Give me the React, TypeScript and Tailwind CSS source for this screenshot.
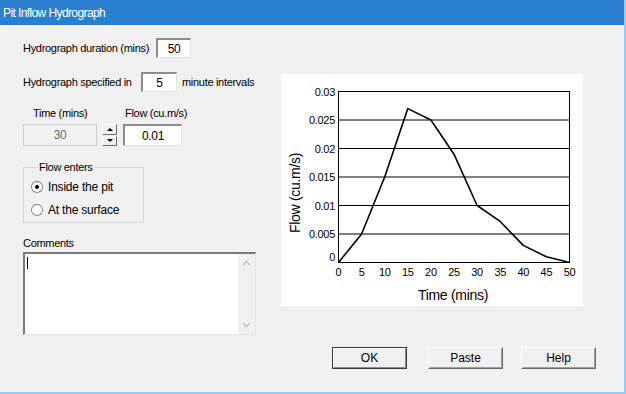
const font = { fontFamily: '"Liberation Sans", Arial, sans-serif' };

const data: [number, number][] = [
  [0, 0], [5, 0.005], [10, 0.015], [15, 0.027], [20, 0.025], [25, 0.019],
  [30, 0.01], [35, 0.0072], [40, 0.003], [45, 0.001], [50, 0],
];

// plot area inside the white chart panel
const X0 = 57.5;
const W = 231;
const Y0 = 17.5;
const H = 171;
const px = (t: number) => X0 + (t / 50) * W;
const py = (v: number) => Y0 + H - (v / 0.03) * H;

function Chart() {
  const yTicks = [0.03, 0.025, 0.02, 0.015, 0.01, 0.005, 0];
  const xTicks = [0, 5, 10, 15, 20, 25, 30, 35, 40, 45, 50];
  return (
    <div className="w-[302px] h-[232px] bg-white">
      <svg width="302" height="232" style={font}>
        {yTicks.map((v) => (
          <g key={v}>
            <line x1={X0} x2={X0 + W} y1={py(v)} y2={py(v)} stroke="#000" strokeWidth="1" />
            <text
              x={54}
              y={v === 0 ? py(v) - 2 : py(v) + 4}
              textAnchor="end"
              fontSize="11"
              fill="#000"
            >
              {v === 0 ? '0' : String(v)}
            </text>
          </g>
        ))}
        <rect x={X0} y={Y0} width={W} height={H} fill="none" stroke="#000" strokeWidth="1" />
        {xTicks.map((t) => (
          <text key={t} x={px(t)} y={202} textAnchor="middle" fontSize="11" fill="#000">
            {t}
          </text>
        ))}
        <polyline
          points={data.map(([t, v]) => `${px(t)},${py(v)}`).join(' ')}
          fill="none"
          stroke="#000"
          strokeWidth="1.6"
          strokeLinejoin="round"
        />
        <text x={172} y={226} textAnchor="middle" fontSize="14" fill="#000">
          Time (mins)
        </text>
        <text
          x={0}
          y={0}
          textAnchor="middle"
          fontSize="14"
          fill="#000"
          transform="translate(19 119) rotate(-90)"
        >
          Flow (cu.m/s)
        </text>
      </svg>
    </div>
  );
}

function Field({ value, w, h = 'h-[20px]' }: { value: string; w: string; h?: string }) {
  return (
    <div
      className={`${w} ${h} bg-white border-t-2 border-l-2 border-b border-r border-t-[#8c8c8c] border-l-[#8c8c8c] border-b-[#e3e3e3] border-r-[#e3e3e3] flex items-center justify-center text-[12px] text-black`}
    >
      {value}
    </div>
  );
}

function Radio({ checked, label }: { checked?: boolean; label: string }) {
  return (
    <div className="flex items-center h-[14px]">
      <span className="w-[12px] h-[12px] rounded-full bg-white border border-[#8a8a8a] border-t-[#6d6d6d] flex items-center justify-center">
        {checked && <span className="w-[4px] h-[4px] rounded-full bg-black" />}
      </span>
      <span className="ml-[5px] text-[12px] tracking-[-0.2px]">{label}</span>
    </div>
  );
}

function Button({ label, def }: { label: string; def?: boolean }) {
  return (
    <div
      className={`w-[75px] h-[22px] flex items-center justify-center text-[12px] bg-[#f0f0f0] ${
        def ? 'border border-[#3c3c3c]' : 'border border-t-white border-l-white border-b-[#6a6a6a] border-r-[#6a6a6a]'
      }`}
    >
      <div
        className={`w-full h-full flex items-center justify-center ${
          def ? 'border border-t-white border-l-white border-b-[#8a8a8a] border-r-[#8a8a8a]' : 'border border-[#f0f0f0] border-b-[#a0a0a0] border-r-[#a0a0a0]'
        }`}
      >
        {label}
      </div>
    </div>
  );
}

export default function App() {
  return (
    <div className="w-[626px] h-[394px] flex bg-[#f0f0f0] overflow-hidden text-black" style={font}>
      <div className="w-[624px] flex flex-col">
        {/* Title bar */}
        <div className="h-[25px] bg-[#2a80cf] flex items-center pl-[3px] text-white text-[12px] tracking-[-0.6px]">
          Pit Inflow Hydrograph
        </div>

        <div className="flex-1 flex text-[11px] tracking-[-0.3px]">
          {/* Left column */}
          <div className="pl-[23px] pt-[13px] w-[256px] flex flex-col">
            <div className="flex items-center h-[20px]">
              <span className="w-[133px]">Hydrograph duration (mins)</span>
              <Field value="50" w="w-[35px]" />
            </div>
            <div className="flex items-center h-[20px] mt-[14px]">
              <span className="w-[118px]">Hydrograph specified in</span>
              <Field value="5" w="w-[36px]" />
              <span className="ml-[5px]">minute intervals</span>
            </div>
            <div className="flex items-center h-[14px] mt-[14px]">
              <span className="ml-[10px] w-[92px]">Time (mins)</span>
              <span>Flow (cu.m/s)</span>
            </div>
            <div className="flex items-center h-[22px] mt-[4px]">
              <div className="w-[74px] h-[22px] bg-[#f0f0f0] border border-[#cccccc] flex items-center justify-center text-[12px] text-[#6d6d6d]">
                30
              </div>
              <div className="ml-[5px] w-[15px] h-[22px] flex flex-col gap-[1px]">
                <div className="flex-1 bg-[#f0f0f0] border border-t-white border-l-white border-b-[#6a6a6a] border-r-[#6a6a6a] flex items-center justify-center">
                  <span className="w-0 h-0 border-l-[3px] border-r-[3px] border-b-[3px] border-l-transparent border-r-transparent border-b-black" />
                </div>
                <div className="flex-1 bg-[#f0f0f0] border border-t-white border-l-white border-b-[#6a6a6a] border-r-[#6a6a6a] flex items-center justify-center">
                  <span className="w-0 h-0 border-l-[3px] border-r-[3px] border-t-[3px] border-l-transparent border-r-transparent border-t-black" />
                </div>
              </div>
              <div className="ml-[6px]">
                <Field value="0.01" w="w-[59px]" h="h-[22px]" />
              </div>
            </div>

            <fieldset className="mt-[14px] w-[121px] h-[63px] border border-[#d5d5d5] pl-[7px]">
              <legend className="ml-[7px] px-[1px] text-[11px] leading-[14px]">Flow enters</legend>
              <div className="mt-[6px] flex flex-col gap-[9px]">
                <Radio checked label="Inside the pit" />
                <Radio label="At the surface" />
              </div>
            </fieldset>

            <div className="mt-[13px] h-[14px] leading-[14px]">Comments</div>
            <div className="mt-[2px] w-[233px] h-[83px] bg-white flex border-t-2 border-l-2 border-b border-r border-t-[#7a7a7a] border-l-[#7a7a7a] border-b-[#e3e3e3] border-r-[#e3e3e3]">
              <div className="flex-1 pl-[2px] pt-[3px]">
                <div className="w-[1px] h-[12px] bg-black" />
              </div>
              <div className="w-[17px] bg-[#f0f0f0] flex flex-col items-center justify-between py-[6px]">
                <svg width="9" height="6" viewBox="0 0 9 6">
                  <path d="M1 5 L4.5 1.5 L8 5" fill="none" stroke="#bdbdbd" strokeWidth="1.3" />
                </svg>
                <svg width="9" height="6" viewBox="0 0 9 6">
                  <path d="M1 1 L4.5 4.5 L8 1" fill="none" stroke="#bdbdbd" strokeWidth="1.3" />
                </svg>
              </div>
            </div>
          </div>

          {/* Right column */}
          <div className="ml-[25px] pt-[49px] flex flex-col">
            <Chart />
            <div className="mt-[41px] ml-[51px] flex text-[12px] tracking-normal">
              <Button label="OK" def />
              <div className="ml-[21px]">
                <Button label="Paste" />
              </div>
              <div className="ml-[18px]">
                <Button label="Help" />
              </div>
            </div>
          </div>
        </div>
        <div className="h-[2px] bg-[#9ccbf1]" />
      </div>
      <div className="w-[2px] bg-[#9ccbf1]" />
    </div>
  );
}
